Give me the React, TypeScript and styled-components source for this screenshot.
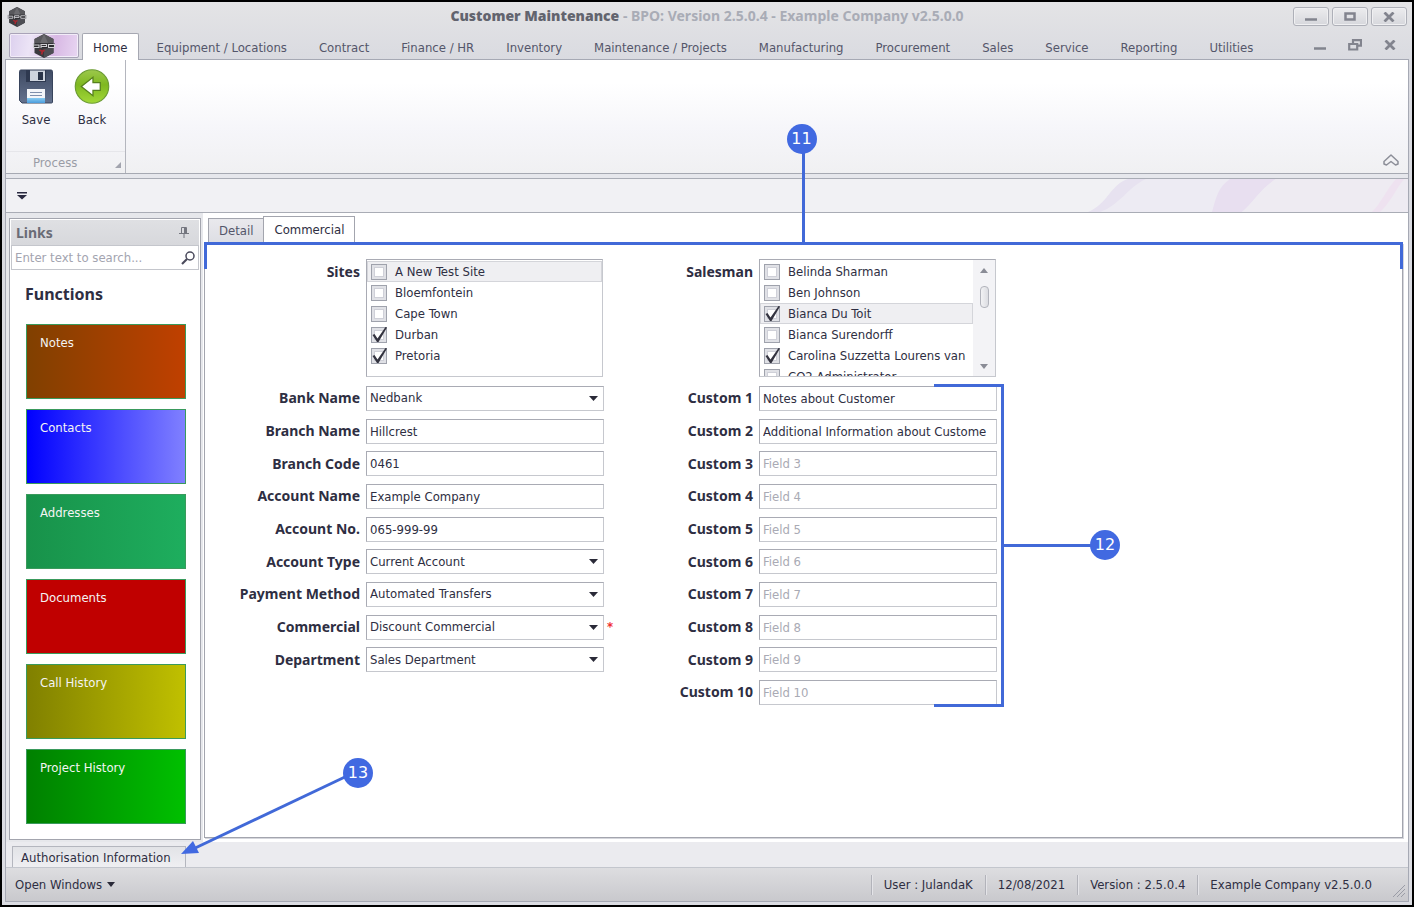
import React from "react";
import styled, { createGlobalStyle } from "styled-components";

const ui = '"DejaVu Sans Condensed", "DejaVu Sans", sans-serif';
const strongUi = '"Noto Sans", "Open Sans", sans-serif';
const accent = "#4169d8";

const Global = createGlobalStyle`
  *, *::before, *::after { box-sizing: border-box; }
  body { margin: 0; background: #000; font: 13px/16px ${ui}; color: #2e2e42; }
  button, input, select { font: inherit; color: inherit; margin: 0; }
  button { cursor: pointer; }
  ul { list-style: none; margin: 0; padding: 0; }
`;

/* window frame */

const Frame = styled.div`
  display: flex;
  flex-direction: column;
  min-height: 100vh;
  border: 2px solid #000;
  padding: 0 3px 3px 3px;
  background: linear-gradient(#e4e4e6, #d9dae0 60px, #dcdde3);
  overflow: hidden;
`;

const TitleBar = styled.header`
  position: relative;
  display: flex;
  align-items: center;
  justify-content: space-between;
  height: 29px;
  padding: 0 0 0 2px;
`;

const WindowTitle = styled.h1`
  position: absolute;
  inset: 0;
  margin: 0;
  text-align: center;
  font-family: ${strongUi};
  font-size: 14px;
  line-height: 28px;
  color: #a9acb6;
  pointer-events: none;
  strong { color: #62646e; }
`;

const WindowButtons = styled.div`
  display: flex;
  gap: 3px;
  padding-right: 2px;
  z-index: 1;
`;

const WindowButton = styled.button`
  display: grid;
  place-items: center;
  width: 36px;
  height: 19px;
  padding: 0;
  border: 1px solid #aeb0b8;
  border-radius: 3px;
  background: linear-gradient(#ececee, #d6d7dc);
  box-shadow: inset 0 0 0 1px #f0f0f2;
`;

/* ribbon */

const RibbonTabs = styled.nav`
  display: flex;
  align-items: flex-end;
  height: 28px;
  padding-left: 4px;
`;

const AppButton = styled.button`
  display: grid;
  place-items: center;
  width: 70px;
  height: 25px;
  margin: 0 3px 1px 0;
  padding: 0;
  border: 1px solid #a9a3b8;
  border-radius: 2px;
  background: linear-gradient(100deg, #dcd0ee, #ece4f6 30%, #d8b8e4 65%, #e8d6f2);
  box-shadow: inset 0 0 0 1px #f2ecf8;
`;

const RibbonTab = styled.a<{ $active?: boolean }>`
  height: ${(p) => (p.$active ? 27 : 26)}px;
  padding: 0 ${(p) => (p.$active ? 10 : 16)}px;
  margin-right: ${(p) => (p.$active ? 2 : 0)}px;
  margin-bottom: ${(p) => (p.$active ? -1 : 0)}px;
  border: 1px solid ${(p) => (p.$active ? "#a6a8b2" : "transparent")};
  border-width: 1px ${(p) => (p.$active ? 1 : 0)}px 0;
  border-radius: 2px 2px 0 0;
  background: ${(p) => (p.$active ? "#fff" : "none")};
  color: ${(p) => (p.$active ? "#2e2e42" : "#54566a")};
  line-height: 27px;
  text-decoration: none;
  white-space: nowrap;
  z-index: 1;
`;

const ChildButtons = styled.div`
  display: flex;
  gap: 22px;
  margin-left: auto;
  padding: 0 13px 8px 0;
`;

const PlainButton = styled.button`
  display: grid;
  place-items: center;
  padding: 0;
  border: 0;
  background: none;
`;

const Workspace = styled.div`
  display: flex;
  flex-direction: column;
  flex: 1;
  border: 1px solid #a6a9b4;
  background: #e6e7ec;
`;

const Ribbon = styled.section`
  display: flex;
  justify-content: space-between;
  align-items: stretch;
  height: 114px;
  border-bottom: 1px solid #a6a9b2;
  background: linear-gradient(#fff 20%, #f6f6fa 60%, #f0f0f2);
`;

const RibbonGroup = styled.div`
  display: flex;
  flex-direction: column;
  justify-content: space-between;
  width: 120px;
  border-right: 1px solid #b4b6be;
`;

const GroupTools = styled.div`
  display: flex;
  gap: 2px;
  padding: 9px 2px 0 3px;
`;

const ToolButton = styled.button`
  display: flex;
  flex-direction: column;
  align-items: center;
  gap: 8px;
  width: 54px;
  padding: 0;
  border: 0;
  background: none;
`;

const GroupCaption = styled.div`
  display: flex;
  align-items: center;
  justify-content: space-between;
  height: 22px;
  padding: 0 4px 0 27px;
  border-top: 1px solid #e6e6ea;
  color: #9a9ca6;
  svg { margin-top: 5px; }
`;

const CollapseSlot = styled.div`
  display: flex;
  align-items: flex-end;
  padding: 0 9px 6px 0;
`;

const QuickBar = styled.div`
  position: relative;
  display: flex;
  align-items: center;
  height: 35px;
  margin-top: 4px;
  padding-left: 11px;
  border: 1px solid #a9acb5;
  border-width: 1px 0;
  background: #f1f1f4;
`;

const Swoosh = styled.svg`
  position: absolute;
  right: 0;
  top: 0;
`;

/* body */

const Body = styled.div`
  display: flex;
  flex: 1;
  background: #e6e7eb;
`;

const SidePanel = styled.aside`
  width: 192px;
  margin: 5px 2px 2px 3px;
  padding: 1px;
  border: 1px solid #a3a5ae;
  background: #fff;
`;

const PanelHeader = styled.h2`
  display: flex;
  align-items: center;
  justify-content: space-between;
  height: 25px;
  margin: 0;
  padding: 0 10px 0 5px;
  background: linear-gradient(#dfe0e3, #d7d8dc);
  font-family: ${strongUi};
  font-size: 14px;
  line-height: 16px;
  color: #6a6c76;
`;

const SearchBox = styled.div`
  display: flex;
  align-items: center;
  height: 25px;
  padding-right: 3px;
  border: 1px solid #c4c6cc;
  input {
    flex: 1;
    min-width: 0;
    padding: 0 3px;
    border: 0;
    outline: 0;
    background: none;
  }
  input::placeholder { color: #a3a4b0; opacity: 1; }
`;

const FunctionsTitle = styled.h3`
  margin: 14px 14px 20px;
  font-family: ${strongUi};
  font-size: 16px;
  line-height: 20px;
`;

const Tiles = styled.div`
  display: grid;
  gap: 10px;
  padding: 0 13px 14px 15px;
`;

const Tile = styled.button<{ $from: string; $to: string }>`
  display: flex;
  height: 75px;
  padding: 10px 13px;
  border: 1px solid #3a9a5c;
  background: linear-gradient(90deg, ${(p) => p.$from}, ${(p) => p.$to});
  color: #f4f4f4;
`;

const Main = styled.main`
  display: flex;
  flex-direction: column;
  flex: 1;
  padding: 3px 5px 4px 1px;
  background: #fff;
`;

const PageTabs = styled.div`
  display: flex;
  align-items: flex-end;
  height: 27px;
  padding-left: 4px;
`;

const PageTab = styled.button<{ $active?: boolean }>`
  height: ${(p) => (p.$active ? 27 : 25)}px;
  padding: 0 10px;
  border: 1px solid #a3a5ae;
  border-width: 1px ${(p) => (p.$active ? 1 : 0)}px 0 1px;
  background: ${(p) => (p.$active ? "#fff" : "linear-gradient(#e9e9ed, #dddee4)")};
  color: ${(p) => (p.$active ? "#2e2e42" : "#54566a")};
`;

const Page = styled.div`
  position: relative;
  display: flex;
  align-items: flex-start;
  flex: 1;
  padding-top: 15px;
  border: 1px solid #a3a5ae;
  box-shadow: 1px 1px 0 #d5d6dc;
`;

const FormColumn = styled.div<{ $label: number }>`
  position: relative;
  display: grid;
  grid-template-columns: ${(p) => p.$label}px 238px;
  grid-template-rows: 118px 320px;
  gap: 8px 6px;
  & > *:nth-child(n + 3) { grid-column: 1 / -1; }
`;

const FieldRows = styled.div`
  display: grid;
  grid-template-rows: 26px repeat(9, 25px);
  align-content: space-between;
`;

const FieldRow = styled.div<{ $label: number }>`
  position: relative;
  display: grid;
  grid-template-columns: ${(p) => p.$label}px 238px;
  column-gap: 6px;
  align-items: center;
`;

const FieldLabel = styled.label`
  text-align: right;
  font-family: ${strongUi};
  font-size: 14px;
  font-weight: bold;
`;

const ListLabel = styled.div`
  padding-top: 5px;
  text-align: right;
  font-family: ${strongUi};
  font-size: 14px;
  font-weight: bold;
`;

const Required = styled.span`
  position: absolute;
  left: 100%;
  margin-left: 3px;
  color: #f03030;
  font-weight: bold;
`;

const TextField = styled.input`
  width: 100%;
  height: 25px;
  padding: 0 3px;
  border: 1px solid #c6c8ce;
  border-top-color: #a9abb4;
  border-left-color: #a9abb4;
  background: #fff;
  outline: 0;
  &::placeholder { color: #a9aab4; opacity: 1; }
`;

const SelectWrap = styled.div`
  position: relative;
  svg { position: absolute; right: 6px; top: 10px; pointer-events: none; }
`;

const SelectField = styled(TextField).attrs({ as: "select" })`
  display: block;
  appearance: none;
`;

const ListBox = styled.div`
  display: flex;
  height: 118px;
  width: 237px;
  border: 1px solid #c6c8ce;
  border-top-color: #a9abb4;
  border-left-color: #a9abb4;
  overflow: hidden;
`;

const ListItems = styled.ul`
  flex: 1;
  min-width: 0;
  padding-top: 1px;
  overflow: hidden;
`;

const ListItem = styled.li<{ $selected?: boolean }>`
  height: 21px;
  padding: 0 4px 0 3px;
  border: 1px solid ${(p) => (p.$selected ? "#d4d5da" : "transparent")};
  background: ${(p) => (p.$selected ? "#efeff2" : "none")};
  label {
    display: flex;
    align-items: center;
    gap: 8px;
    height: 19px;
    overflow: hidden;
    white-space: nowrap;
  }
`;

const Tick = styled.span`
  position: relative;
  flex: none;
  display: block;
  width: 16px;
  height: 16px;
  svg { position: absolute; left: 0; top: -1px; pointer-events: none; }
`;

const TickInput = styled.input`
  appearance: none;
  display: block;
  width: 16px;
  height: 16px;
  border: 1px solid #9fa2ac;
  background: #fff;
  box-shadow: inset 0 0 0 2px #e0e1e6, inset 0 0 0 3px #cfd0d8;
`;

const ScrollBar = styled.div`
  display: flex;
  flex-direction: column;
  align-items: center;
  width: 22px;
  padding: 8px 0 7px;
  background: #f3f3f6;
`;

const ScrollThumb = styled.div`
  width: 9px;
  height: 22px;
  margin: 13px 0 auto;
  border: 1px solid #b2b4bc;
  border-radius: 4px;
  background: linear-gradient(90deg, #f2f2f4, #dcdde2);
`;

/* lower strips */

const DockStrip = styled.div`
  display: flex;
  align-items: flex-end;
  height: 25px;
  padding-left: 6px;
  background: #ebebef;
`;

const DockTab = styled.button`
  position: relative;
  height: 21px;
  padding: 2px 14px 0 8px;
  border: 1px solid #b4b6be;
  border-bottom: 0;
  background: linear-gradient(#e2e3e7, #efeff2);
`;

const StatusBar = styled.footer`
  display: flex;
  align-items: center;
  justify-content: space-between;
  height: 34px;
  border-top: 1px solid #c3c6cd;
  background: linear-gradient(#dddde0, #c9c9cd);
`;

const OpenWindows = styled.button`
  display: flex;
  align-items: center;
  gap: 5px;
  padding: 0 9px;
  border: 0;
  background: none;
`;

const StatusItems = styled.div`
  display: flex;
  align-items: center;
`;

const StatusItem = styled.span`
  padding: 2px 12px;
  border-left: 1px solid #b2b3ba;
  box-shadow: inset 1px 0 0 #e4e4e8;
`;

const Grip = styled.svg`
  align-self: flex-end;
  margin: 12px 2px 0 8px;
`;

/* callouts drawn over the window */

const Badge = styled.span`
  position: absolute;
  display: grid;
  place-items: center;
  width: 30px;
  height: 30px;
  border-radius: 50%;
  background: #4169e1;
  color: #fff;
  font: 16px/30px "DejaVu Sans", sans-serif;
`;

const PageBracket = styled.div`
  position: absolute;
  left: -1px;
  right: -1px;
  top: -2px;
  height: 27px;
  border: solid ${accent};
  border-width: 3px 3px 0;
  pointer-events: none;
  &::before {
    content: "";
    position: absolute;
    left: 50%;
    top: -92px;
    width: 3px;
    height: 90px;
    margin-left: -2px;
    background: ${accent};
  }
  ${Badge} { left: 50%; top: -121px; margin-left: -17px; }
`;

const FieldBracket = styled.div`
  position: absolute;
  right: -7px;
  bottom: -2px;
  width: 70px;
  height: 323px;
  border: solid ${accent};
  border-width: 3px 3px 3px 0;
  pointer-events: none;
  &::before {
    content: "";
    position: absolute;
    left: 100%;
    top: 50%;
    width: 90px;
    height: 3px;
    margin-top: -2px;
    background: ${accent};
  }
  ${Badge} { left: 156px; top: 50%; margin-top: -16px; }
`;

const DockPointer = styled.span`
  position: absolute;
  left: 168px;
  bottom: 13px;
  width: 193px;
  height: 98px;
  pointer-events: none;
  svg { position: absolute; left: 0; bottom: 0; }
  ${Badge} { right: 1px; top: 2px; }
`;

/* drawings */

const Logo = ({ size }: { size: number }) => (
  <svg width={size} height={size} viewBox="0 0 24 24" aria-hidden="true">
    <path d="M12 0l9.500 5v14L12 24 2.500 19V5z" fill="#3a3a3e" />
    <path d="M12 0l9.500 5v4h-19V5z" fill="#58585c" />
    <path d="M12 0l4 9H8z" fill="#6c6c70" />
    <path d="M12 15l9.500-2v6L12 24z" fill="#4e4e54" />
    <path d="M1 9.500h22v4.500H1z" fill="#2c2c30" />
    <path d="M1.500 9v4.500H7v-2.500H2M9 14v-3.500h5.500v2H9.500M16.500 10.500h6v3h-6z" fill="none" stroke="#d0d0d4" strokeWidth="1.100" />
    <path d="M7.500 16l3 1.500-1 3M10.500 17.500l2-1.500" stroke="#a82830" strokeWidth="1.800" fill="none" />
  </svg>
);

const Floppy = () => (
  <svg width="34" height="35" viewBox="0 0 34 35" aria-hidden="true">
    <defs>
      <linearGradient id="fl" x1="0" y1="0" x2="0" y2="1">
        <stop offset="0" stopColor="#3e4a62" />
        <stop offset="1" stopColor="#64728e" />
      </linearGradient>
      <linearGradient id="fb" x1="0" y1="0" x2="0" y2="1">
        <stop offset="0" stopColor="#8accf2" />
        <stop offset="1" stopColor="#4a9cdc" />
      </linearGradient>
    </defs>
    <path d="M2 1h30a1.500 1.500 0 0 1 1.500 1.500V33a1 1 0 0 1-1 1H3L.5 31.500V2.500A1.500 1.500 0 0 1 2 1z" fill="url(#fl)" stroke="#38445c" />
    <path d="M7 1h20v12H7z" fill="#2e3950" />
    <path d="M11 1.500h15V12H11z" fill="#cfd5de" />
    <path d="M19 3h5v8h-5z" fill="#2a3448" />
    <path d="M8 20h18v14H8z" fill="#f4f6f9" />
    <path d="M11 23.500h12M11 26.500h12" stroke="#7f90ac" />
    <path d="M8 29h18v5H8z" fill="url(#fb)" />
  </svg>
);

const BackArrow = () => (
  <svg width="36" height="35" viewBox="0 0 36 36" aria-hidden="true">
    <defs>
      <linearGradient id="bk" x1="0" y1="0" x2="0" y2="1">
        <stop offset="0" stopColor="#9cc84c" />
        <stop offset="0.450" stopColor="#7fb820" />
        <stop offset="1" stopColor="#a2d838" />
      </linearGradient>
    </defs>
    <circle cx="18" cy="18" r="17.200" fill="url(#bk)" stroke="#6c9c34" strokeWidth="1.200" />
    <path d="M7 18l12-9.500V14h7.500v8H19v5.500z" fill="#fff" stroke="#56801c" strokeWidth="1.300" />
  </svg>
);

const Down = ({ w = 9, fill = "#2a2a38" }: { w?: number; fill?: string }) => (
  <svg width={w} height="5" viewBox="0 0 10 5" preserveAspectRatio="none" aria-hidden="true">
    <path d="M0 0h10L5 5z" fill={fill} />
  </svg>
);

const Up = () => (
  <svg width="8" height="5" viewBox="0 0 8 5" aria-hidden="true">
    <path d="M0 5h8L4 0z" fill="#8a8c96" />
  </svg>
);

const Minus = () => (
  <svg width="12" height="11" viewBox="0 0 12 11" aria-hidden="true">
    <path d="M0 8.500h12" stroke="#82848e" strokeWidth="2.500" />
  </svg>
);

const Box = () => (
  <svg width="12" height="9" viewBox="0 0 12 9" aria-hidden="true">
    <path d="M1.500 1.500h9v6h-9z" fill="none" stroke="#82848e" strokeWidth="2.500" />
  </svg>
);

const Restore = () => (
  <svg width="14" height="12" viewBox="0 0 14 12" aria-hidden="true">
    <path d="M5 4V1.200h8v5.500h-3M1.200 5h8v5.500h-8z" fill="none" stroke="#82848e" strokeWidth="2.200" />
  </svg>
);

const Cross = () => (
  <svg width="12" height="10" viewBox="0 0 12 10" aria-hidden="true">
    <path d="M1.500 0.500l9 9M10.500 0.500l-9 9" stroke="#82848e" strokeWidth="2.800" />
  </svg>
);

const Check = () => (
  <svg width="17" height="17" viewBox="0 0 17 17" aria-hidden="true">
    <path d="M1.500 9L3.500 8l3 4.500L14.500 1l1.500.5L7.500 16H6z" fill="#343440" />
  </svg>
);

/* data */

const ribbonTabs = [
  "Equipment / Locations", "Contract", "Finance / HR", "Inventory", "Maintenance / Projects",
  "Manufacturing", "Procurement", "Sales", "Service", "Reporting", "Utilities",
];

const tiles = [
  ["Notes", "#804000", "#c04000"],
  ["Contacts", "#0000ff", "#8080ff"],
  ["Addresses", "#18924a", "#1eae5e"],
  ["Documents", "#c00000", "#c00000"],
  ["Call History", "#808000", "#c0c000"],
  ["Project History", "#008000", "#00c000"],
];

type Item = { name: string; on?: boolean; selected?: boolean };

const sites: Item[] = [
  { name: "A New Test Site", selected: true },
  { name: "Bloemfontein" },
  { name: "Cape Town" },
  { name: "Durban", on: true },
  { name: "Pretoria", on: true },
];

const salesmen: Item[] = [
  { name: "Belinda Sharman" },
  { name: "Ben Johnson" },
  { name: "Bianca Du Toit", on: true, selected: true },
  { name: "Bianca Surendorff" },
  { name: "Carolina Suzzetta Lourens van", on: true },
  { name: "CO2 Administrator" },
];

type Field = { label: string; value: string; select?: boolean; required?: boolean };

const bankFields: Field[] = [
  { label: "Bank Name", value: "Nedbank", select: true },
  { label: "Branch Name", value: "Hillcrest" },
  { label: "Branch Code", value: "0461" },
  { label: "Account Name", value: "Example Company" },
  { label: "Account No.", value: "065-999-99" },
  { label: "Account Type", value: "Current Account", select: true },
  { label: "Payment Method", value: "Automated Transfers", select: true },
  { label: "Commercial", value: "Discount Commercial", select: true, required: true },
  { label: "Department", value: "Sales Department", select: true },
];

const customValues = ["Notes about Customer", "Additional Information about Custome"];

const List = ({ items, label, scroll }: { items: Item[]; label: string; scroll?: boolean }) => (
  <ListBox role="group" aria-label={label}>
    <ListItems>
      {items.map((it) => (
        <ListItem key={it.name} $selected={it.selected}>
          <label>
            <Tick>
              <TickInput type="checkbox" defaultChecked={it.on} />
              {it.on && <Check />}
            </Tick>
            {it.name}
          </label>
        </ListItem>
      ))}
    </ListItems>
    {scroll && (
      <ScrollBar>
        <Up />
        <ScrollThumb />
        <Down w={8} fill="#8a8c96" />
      </ScrollBar>
    )}
  </ListBox>
);

export default function App() {
  return (
    <Frame>
      <Global />
      <TitleBar>
        <Logo size={20} />
        <WindowTitle><strong>Customer Maintenance</strong> - BPO: Version 2.5.0.4 - Example Company v2.5.0.0</WindowTitle>
        <WindowButtons>
          <WindowButton aria-label="Minimise"><Minus /></WindowButton>
          <WindowButton aria-label="Maximise"><Box /></WindowButton>
          <WindowButton aria-label="Close"><Cross /></WindowButton>
        </WindowButtons>
      </TitleBar>
      <RibbonTabs>
        <AppButton aria-label="Application menu"><Logo size={24} /></AppButton>
        <RibbonTab href="#home" $active>Home</RibbonTab>
        {ribbonTabs.map((t) => <RibbonTab key={t} href="#tab">{t}</RibbonTab>)}
        <ChildButtons>
          <PlainButton aria-label="Minimise page"><Minus /></PlainButton>
          <PlainButton aria-label="Restore page"><Restore /></PlainButton>
          <PlainButton aria-label="Close page"><Cross /></PlainButton>
        </ChildButtons>
      </RibbonTabs>
      <Workspace>
        <Ribbon>
          <RibbonGroup>
            <GroupTools>
              <ToolButton><Floppy />Save</ToolButton>
              <ToolButton><BackArrow />Back</ToolButton>
            </GroupTools>
            <GroupCaption>
              Process
              <svg width="6" height="6" viewBox="0 0 6 6" aria-hidden="true"><path d="M6 0v6H0z" fill="#a2a4ae" /></svg>
            </GroupCaption>
          </RibbonGroup>
          <CollapseSlot>
            <PlainButton aria-label="Collapse ribbon">
              <svg width="16" height="13" viewBox="0 0 16 13" fill="none" stroke="#8c8e98" strokeWidth="1.500" strokeLinejoin="round" aria-hidden="true">
                <path d="M8 1l7 6.500v2.500l-2.500 1L8 7.500 3.500 11 1 10V7.500z" />
              </svg>
            </PlainButton>
          </CollapseSlot>
        </Ribbon>
        <QuickBar>
          <PlainButton aria-label="Customise toolbar">
            <svg width="10" height="8" viewBox="0 0 10 8" aria-hidden="true"><path d="M0 0h10v1.500H0zM0 3h10L5 7.500z" fill="#2a2a40" /></svg>
          </PlainButton>
          <Swoosh width="320" height="33" viewBox="0 0 320 33" aria-hidden="true">
            <path d="M0 33C20 25 22 6 40 0h280v33z" fill="#edebf3" />
            <path d="M0 33C20 25 22 6 40 0h18C40 8 32 26 12 33z" fill="#e7e2f0" />
            <path d="M124 33c4-14 6-25 18-33h46c-16 10-22 23-34 33z" fill="#e8dff0" />
            <path d="M188 0h132v33H154c12-10 18-23 34-33z" fill="#eeebf2" />
            <path d="M284 33c10-10 14-22 24-33h8c-8 10-14 24-24 33z" fill="#eee2f0" />
          </Swoosh>
        </QuickBar>
        <Body>
          <SidePanel>
            <PanelHeader>
              Links
              <svg width="10" height="11" viewBox="0 0 10 11" aria-hidden="true">
                <path d="M2.500 .5h5v6h-5zM0 6.500h10M5 7v4" fill="none" stroke="#74767f" />
                <path d="M5 1h2.500v5H5z" fill="#74767f" />
              </svg>
            </PanelHeader>
            <SearchBox>
              <input type="text" aria-label="Search links" placeholder="Enter text to search..." />
              <svg width="14" height="14" viewBox="0 0 14 14" fill="none" stroke="#4a4a5c" aria-hidden="true">
                <circle cx="9" cy="5" r="4" strokeWidth="1.500" />
                <path d="M6 8l-5 5" strokeWidth="2.200" />
              </svg>
            </SearchBox>
            <FunctionsTitle>Functions</FunctionsTitle>
            <Tiles>
              {tiles.map(([name, from, to]) => <Tile key={name} $from={from} $to={to}>{name}</Tile>)}
            </Tiles>
          </SidePanel>
          <Main>
            <PageTabs role="tablist">
              <PageTab role="tab">Detail</PageTab>
              <PageTab role="tab" aria-selected="true" $active>Commercial</PageTab>
            </PageTabs>
            <Page>
              <FormColumn $label={155}>
                <ListLabel>Sites</ListLabel>
                <List items={sites} label="Sites" />
                <FieldRows>
                  {bankFields.map((f) => {
                    const id = f.label.replace(/\W/g, "");
                    return (
                      <FieldRow key={id} $label={155}>
                        <FieldLabel htmlFor={id}>{f.label}</FieldLabel>
                        {f.select ? (
                          <SelectWrap>
                            <SelectField id={id}><option>{f.value}</option></SelectField>
                            <Down />
                          </SelectWrap>
                        ) : (
                          <TextField id={id} defaultValue={f.value} />
                        )}
                        {f.required && <Required>*</Required>}
                      </FieldRow>
                    );
                  })}
                </FieldRows>
              </FormColumn>
              <FormColumn $label={149}>
                <ListLabel>Salesman</ListLabel>
                <List items={salesmen} label="Salesman" scroll />
                <FieldRows>
                  {Array.from({ length: 10 }, (_, i) => (
                    <FieldRow key={i} $label={149}>
                      <FieldLabel htmlFor={`custom${i + 1}`}>Custom {i + 1}</FieldLabel>
                      <TextField id={`custom${i + 1}`} defaultValue={customValues[i]} placeholder={`Field ${i + 1}`} />
                    </FieldRow>
                  ))}
                </FieldRows>
                <FieldBracket><Badge>12</Badge></FieldBracket>
              </FormColumn>
              <PageBracket><Badge>11</Badge></PageBracket>
            </Page>
          </Main>
        </Body>
        <DockStrip>
          <DockTab>
            Authorisation Information
            <DockPointer>
              <svg width="180" height="86" viewBox="0 0 180 86" aria-hidden="true">
                <path d="M10 82L166 8" stroke={accent} strokeWidth="3" />
                <path d="M0 86l12-13 6 12z" fill="#4169e1" />
              </svg>
              <Badge>13</Badge>
            </DockPointer>
          </DockTab>
        </DockStrip>
        <StatusBar>
          <OpenWindows>Open Windows <Down w={8} /></OpenWindows>
          <StatusItems>
            <StatusItem>User : JulandaK</StatusItem>
            <StatusItem>12/08/2021</StatusItem>
            <StatusItem>Version : 2.5.0.4</StatusItem>
            <StatusItem>Example Company v2.5.0.0</StatusItem>
            <Grip width="14" height="14" viewBox="0 0 14 14" stroke="#9a9ca6" aria-hidden="true">
              <path d="M1 13L13 1M5 13l8-8M9 13l4-4" />
            </Grip>
          </StatusItems>
        </StatusBar>
      </Workspace>
    </Frame>
  );
}
